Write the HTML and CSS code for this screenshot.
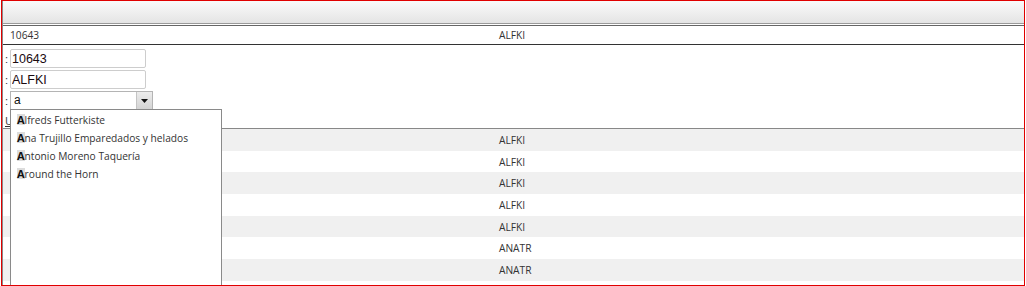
FILE: index.html
```html
<!DOCTYPE html>
<html>
<head>
<meta charset="utf-8">
<link rel="stylesheet" href="styles.css">
</head>
<body>
<div class="frame">
  <div class="grid">
    <div class="head"></div>
    <div class="head-rule"></div>
    <div class="row sel"><span class="c1">10643</span><span class="c2">ALFKI</span></div>
    <div class="edit">
      <div class="field"><span class="lbl">:</span><input class="txt" type="text" value="10643"></div>
      <div class="field"><span class="lbl">:</span><input class="txt" type="text" value="ALFKI"></div>
      <div class="field"><span class="lbl">:</span>
        <div class="combo"><span class="combo-text">a</span><span class="combo-btn"><svg width="7" height="4" viewBox="0 0 7 4"><path d="M0 0H7L3.5 4Z" fill="#111"/></svg></span></div>
      </div>
      <div class="field"><a class="link" href="#">U</a></div>
      <ul class="dropdown">
        <li><b class="hl">A</b>lfreds Futterkiste</li>
        <li><b class="hl">A</b>na Trujillo Emparedados y helados</li>
        <li><b class="hl">A</b>ntonio Moreno Taquería</li>
        <li><b class="hl">A</b>round the Horn</li>
      </ul>
    </div>
    <div class="rows">
      <div class="row alt"><span class="c1"></span><span class="c2">ALFKI</span></div>
      <div class="row"><span class="c1"></span><span class="c2">ALFKI</span></div>
      <div class="row alt"><span class="c1"></span><span class="c2">ALFKI</span></div>
      <div class="row"><span class="c1"></span><span class="c2">ALFKI</span></div>
      <div class="row alt"><span class="c1"></span><span class="c2">ALFKI</span></div>
      <div class="row"><span class="c1"></span><span class="c2">ANATR</span></div>
      <div class="row alt"><span class="c1"></span><span class="c2">ANATR</span></div>
    </div>
  </div>
</div>
</body>
</html>
```
FILE: styles.css
```css
html, body {
  margin: 0;
  padding: 0;
  background: #fff;
}
.frame {
  margin-left: 1px;
  width: 1022px;
  height: 284px;
  border: 1px solid #e00000;
  overflow: hidden;
  font-family: "Open Sans", "Noto Sans", sans-serif;
  font-size: 10.2px;
  color: #333;
}
.grid {
  border-left: 1px solid #8a8a8a;
  height: 100%;
}
.head {
  height: 22px;
  background: linear-gradient(#fafafa, #e4e4e4);
  border-bottom: 1px solid #9a9a9a;
}
.head-rule {
  margin-top: 1px;
  border-top: 1px solid #666;
}
.row {
  display: grid;
  grid-template-columns: 489px 1fr;
  height: 21.7px;
  align-items: center;
}
.row span {
  padding-left: 7px;
}
.row.sel {
  height: 18px;
  border-bottom: 1px solid #333;
}
.row.alt {
  background: #f0f0f0;
}
.edit {
  position: relative;
  box-sizing: border-box;
  height: 84px;
  padding: 4px 0 0 2px;
  border-bottom: 1px solid #888;
  display: flex;
  flex-direction: column;
  gap: 2px;
  font-family: "Liberation Sans", Arial, sans-serif;
  font-size: 12px;
  color: #111;
}
.field {
  display: flex;
  align-items: center;
}
.lbl {
  width: 5px;
  font-size: 11px;
  color: #333;
}
.txt {
  box-sizing: border-box;
  width: 136px;
  height: 19px;
  margin: 0;
  padding: 0 2px 0 1px;
  border: 1px solid #cdcdcd;
  border-radius: 2px;
  font-family: "Liberation Sans", Arial, sans-serif;
  font-size: 12.5px;
  color: #1a0a10;
  background: #fff;
  outline: none;
}
.combo {
  box-sizing: border-box;
  width: 143px;
  height: 19px;
  border: 1px solid #b4b4b4;
  display: flex;
  align-items: stretch;
  background: #fff;
}
.combo-text {
  flex: 1;
  padding-left: 3px;
  line-height: 17px;
}
.combo-btn {
  width: 15px;
  border-left: 1px solid #c4c4c4;
  background: linear-gradient(#ececec, #d4d4d4);
  display: flex;
  align-items: center;
  justify-content: center;
}
.link {
  margin-top: 1px;
  color: #333;
  font-family: "Open Sans", sans-serif;
  font-size: 11px;
  line-height: 15px;
  text-decoration: underline;
}
.dropdown {
  position: absolute;
  left: 7px;
  top: 64px;
  z-index: 2;
  box-sizing: border-box;
  width: 212px;
  height: 200px;
  margin: 0;
  padding: 1px 0 0 6px;
  list-style: none;
  border: 1px solid #8a8a8a;
  background: #fff;
  font-family: "Open Sans", "Noto Sans", sans-serif;
  font-size: 10.2px;
  color: #333;
}
.dropdown li {
  height: 18px;
  line-height: 18px;
  white-space: nowrap;
}
.hl {
  display: inline-block;
  line-height: 11px;
  font-size: 11px;
  background: #dcdcdc;
  color: #111;
  font-weight: bold;
}
```
